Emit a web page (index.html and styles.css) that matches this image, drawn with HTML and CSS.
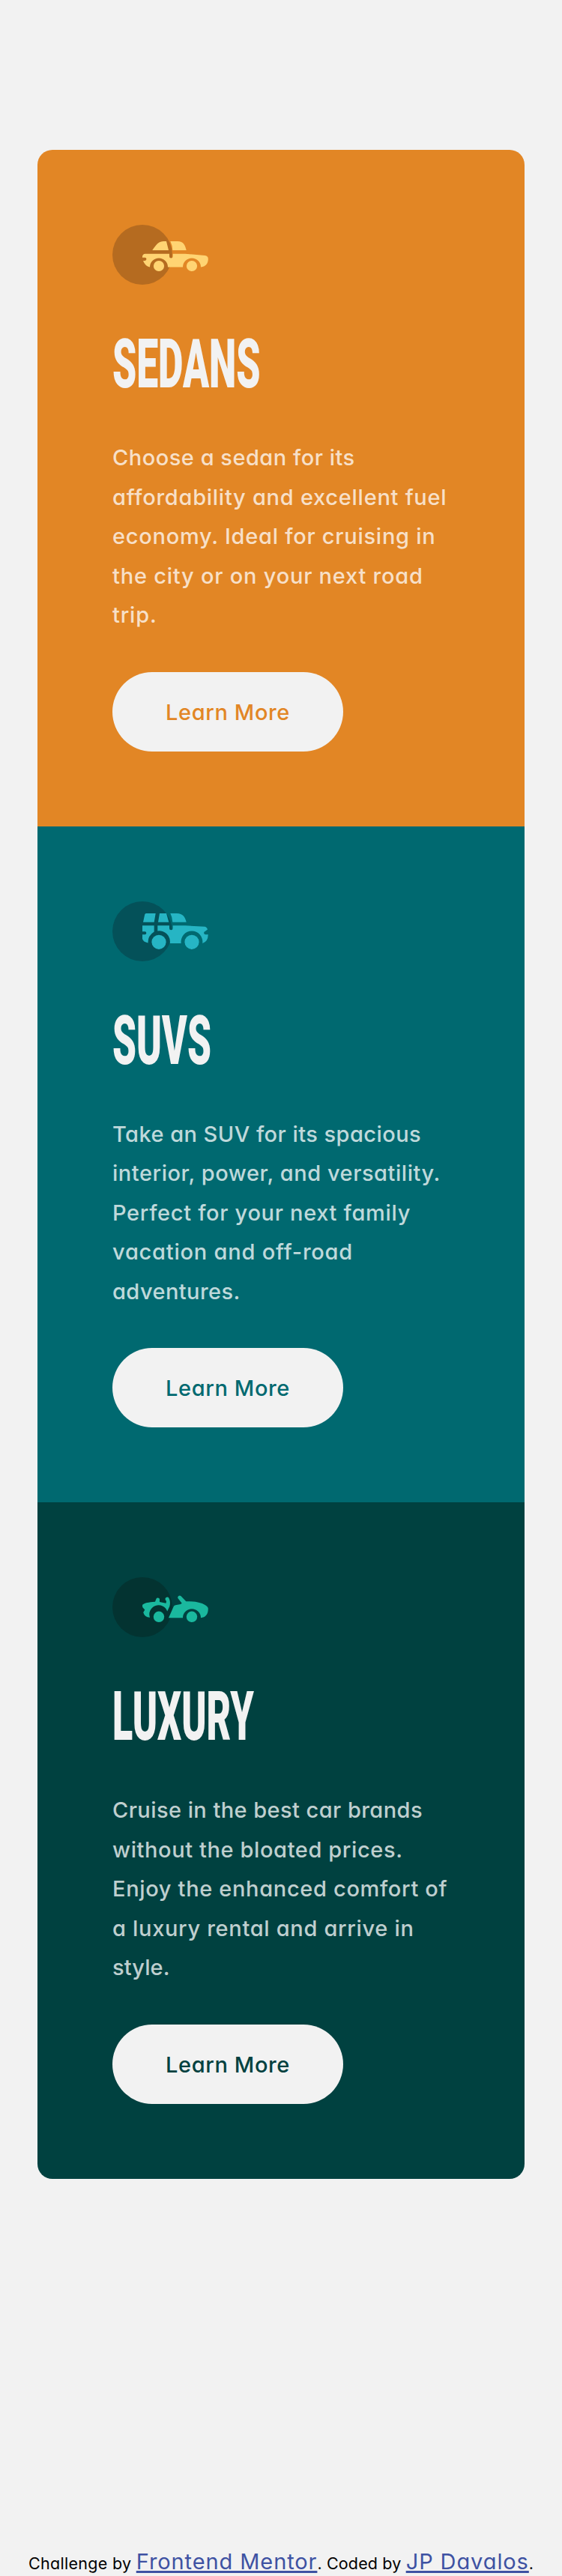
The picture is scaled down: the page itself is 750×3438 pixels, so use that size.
FILE: index.html
```html
<!DOCTYPE html>
<html lang="en">
<head>
<meta charset="utf-8">
<title>3-column preview card</title>
<link rel="stylesheet" href="styles.css">
</head>
<body>
<main class="cards">
  <section class="card sedans">
    <svg class="icon" viewBox="0 0 128 80">
      <circle class="disc" cx="40" cy="40" r="40"/>
      <g class="car">
        <path d="M53.3 34C56 31 59.5 22 68 22H72L75 34ZM77.3 22H87C95 22 97 27 98.7 34H80.3Q80 27 77.3 22Z"/>
        <path d="M44 38.7H76V42.3a2.3 2.3 0 0 0 4.6 0V38.7H97L123.5 41Q128 41.5 127.8 46C127.6 51 125.5 55.5 118 56.5A12 12 0 0 0 94 56.5H74A12 12 0 0 0 50 56.5Q43.5 55 41 48H43.3a2.1 2.1 0 0 0 0-4.3H40Q39.5 39 44 38.7Z"/>
        <circle cx="62" cy="55" r="7.1"/><circle cx="106" cy="55" r="7.1"/>
      </g>
    </svg>
    <h2 class="title">Sedans</h2>
    <p class="text">
      <span class="line l1">Choose a sedan for its</span>
      <span class="line l2">affordability and excellent fuel</span>
      <span class="line l3">economy. Ideal for cruising in</span>
      <span class="line l4">the city or on your next road</span>
      <span class="line l5">trip.</span>
    </p>
    <a class="button">Learn More</a>
  </section>
  <section class="card suvs">
    <svg class="icon" viewBox="0 0 128 80">
      <circle class="disc" cx="40" cy="40" r="40"/>
      <g class="car">
        <path d="M45 16H57.7L55.7 27.7H41L43.2 17.5Q43.6 16 45 16ZM63 16H72L75.3 27.7H61ZM77.3 16H86C94 16 97 21 98.7 27.7H80.3Q80 21 77.3 16Z"/>
        <path d="M40 32.3H55.7V40.5Q47 46 47.6 55.5Q41 54 40 50V44.3H43.3a2 2 0 0 0 0-4H40ZM60.3 32.3H76V36a2.3 2.3 0 0 0 4.6 0V32.3H97L123.5 33.8Q126 34.2 127 37.6L123.7 40A2.2 2.2 0 0 0 124.5 44.3H127.8Q127.5 54 120.2 56A14.4 14.4 0 1 0 91.7 56H76.7A14.4 14.4 0 0 0 60.3 39.5Z"/>
        <circle cx="62" cy="54.3" r="9.6"/><circle cx="106" cy="54.3" r="9.6"/>
      </g>
    </svg>
    <h2 class="title">SUVs</h2>
    <p class="text">
      <span class="line l1">Take an SUV for its spacious</span>
      <span class="line l2">interior, power, and versatility.</span>
      <span class="line l3">Perfect for your next family</span>
      <span class="line l4">vacation and off-road</span>
      <span class="line l5">adventures.</span>
    </p>
    <a class="button">Learn More</a>
  </section>
  <section class="card luxury">
    <svg class="icon" viewBox="0 0 128 80">
      <circle class="disc" cx="40" cy="40" r="40"/>
      <g class="car">
        <path d="M40 37C43 34 48 33.5 57 32.7L58.5 28.7A2.5 2.5 0 0 1 63 29V33L71.5 34.7L72 32L70.6 30A2.7 2.7 0 0 1 75.4 27.7C77 31 77.5 35 76.3 39L73.2 45.6A12 12 0 0 0 50 53.7Q43 53.5 41.2 47L43.3 43.4L40.2 40Z"/>
        <path d="M75 54.3L82 38.5Q83 37 85.5 37L91 36L92.7 34.8L87.4 28A2.6 2.6 0 0 1 91.3 25L98.3 32.3C110 32 121 34 126.3 39Q127.8 40.3 127.8 42C127.8 50 124 53.5 118 54.3A12 12 0 1 0 94 54.3Z"/>
        <circle cx="62" cy="52.8" r="7.2"/><circle cx="106" cy="52.8" r="7.2"/>
      </g>
    </svg>
    <h2 class="title">Luxury</h2>
    <p class="text">
      <span class="line l1">Cruise in the best car brands</span>
      <span class="line l2">without the bloated prices.</span>
      <span class="line l3">Enjoy the enhanced comfort of</span>
      <span class="line l4">a luxury rental and arrive in</span>
      <span class="line l5">style.</span>
    </p>
    <a class="button">Learn More</a>
  </section>
</main>
<footer class="attribution"><span class="by">Challenge by </span><a class="link">Frontend Mentor</a><span class="coded">. Coded by </span><a class="link">JP Davalos</a>.</footer>
</body>
</html>
```
FILE: styles.css
```css
* { box-sizing: border-box; }
body {
  margin: 0;
  height: 3438px;
  padding-top: 200px;
  display: flex;
  flex-direction: column;
  justify-content: space-between;
  background: #f2f2f2;
  font-family: Inter, sans-serif;
  font-feature-settings: "cv11";
}
.cards {
  margin: 0 50px;
  border-radius: 20px;
  overflow: hidden;
}
.card {
  height: 902.5px;
  padding: 100px;
  background: var(--bg);
}
.sedans { --bg: #e28625; --disc: #b56b20; --car: #ffd473; --stretch: .564; }
.suvs { --bg: #006970; --disc: #045159; --car: #26b5c4; --stretch: .56; }
.luxury { --bg: #004140; --disc: #033331; --car: #1ab89e; --stretch: .55; }
.icon {
  display: block;
  width: 128px;
  height: 80px;
}
.disc { fill: var(--disc); }
.car { fill: var(--car); }
.title {
  width: max-content;
  margin: 58px 0 50px;
  font: 900 91.4px/96px Roboto, sans-serif;
  text-transform: uppercase;
  color: #f2f2f2;
  transform: scaleX(var(--stretch));
  transform-origin: left;
}
.text {
  margin: 0;
  padding-top: 1px;
  font-size: 29px;
  font-weight: 540;
  line-height: 52.5px;
  color: rgba(255, 255, 255, .75);
}
.line { display: block; white-space: nowrap; }
.sedans .l1 { letter-spacing: .5px; }
.sedans .l2 { letter-spacing: .73px; }
.sedans .l3 { letter-spacing: .74px; }
.sedans .l4 { letter-spacing: .77px; }
.sedans .l5 { letter-spacing: .8px; }
.suvs .l1 { letter-spacing: .45px; }
.suvs .l2 { letter-spacing: .54px; }
.suvs .l3 { letter-spacing: .68px; }
.suvs .l4 { letter-spacing: .78px; }
.suvs .l5 { letter-spacing: .42px; }
.luxury .l1 { letter-spacing: .43px; }
.luxury .l2 { letter-spacing: .6px; }
.luxury .l3 { letter-spacing: .66px; }
.luxury .l4 { letter-spacing: .68px; }
.luxury .l5 { letter-spacing: .1px; }
.button {
  display: flex;
  align-items: center;
  justify-content: center;
  width: 308px;
  height: 106px;
  margin-top: 49px;
  padding-top: 1px;
  border-radius: 53px;
  background: #f2f2f2;
  color: var(--bg);
  font-size: 29px;
  font-weight: 520;
  letter-spacing: .6px;
}
.attribution {
  text-align: center;
  white-space: pre;
  font-size: 21.5px;
  line-height: 33px;
  color: #000;
}
.by { letter-spacing: .3px; }
.coded { letter-spacing: .15px; }
.link {
  font-size: 29px;
  letter-spacing: .9px;
  color: #3e52a3;
  text-decoration: underline;
  text-decoration-thickness: 3px;
  text-underline-offset: 2px;
  text-decoration-skip-ink: none;
}
```
